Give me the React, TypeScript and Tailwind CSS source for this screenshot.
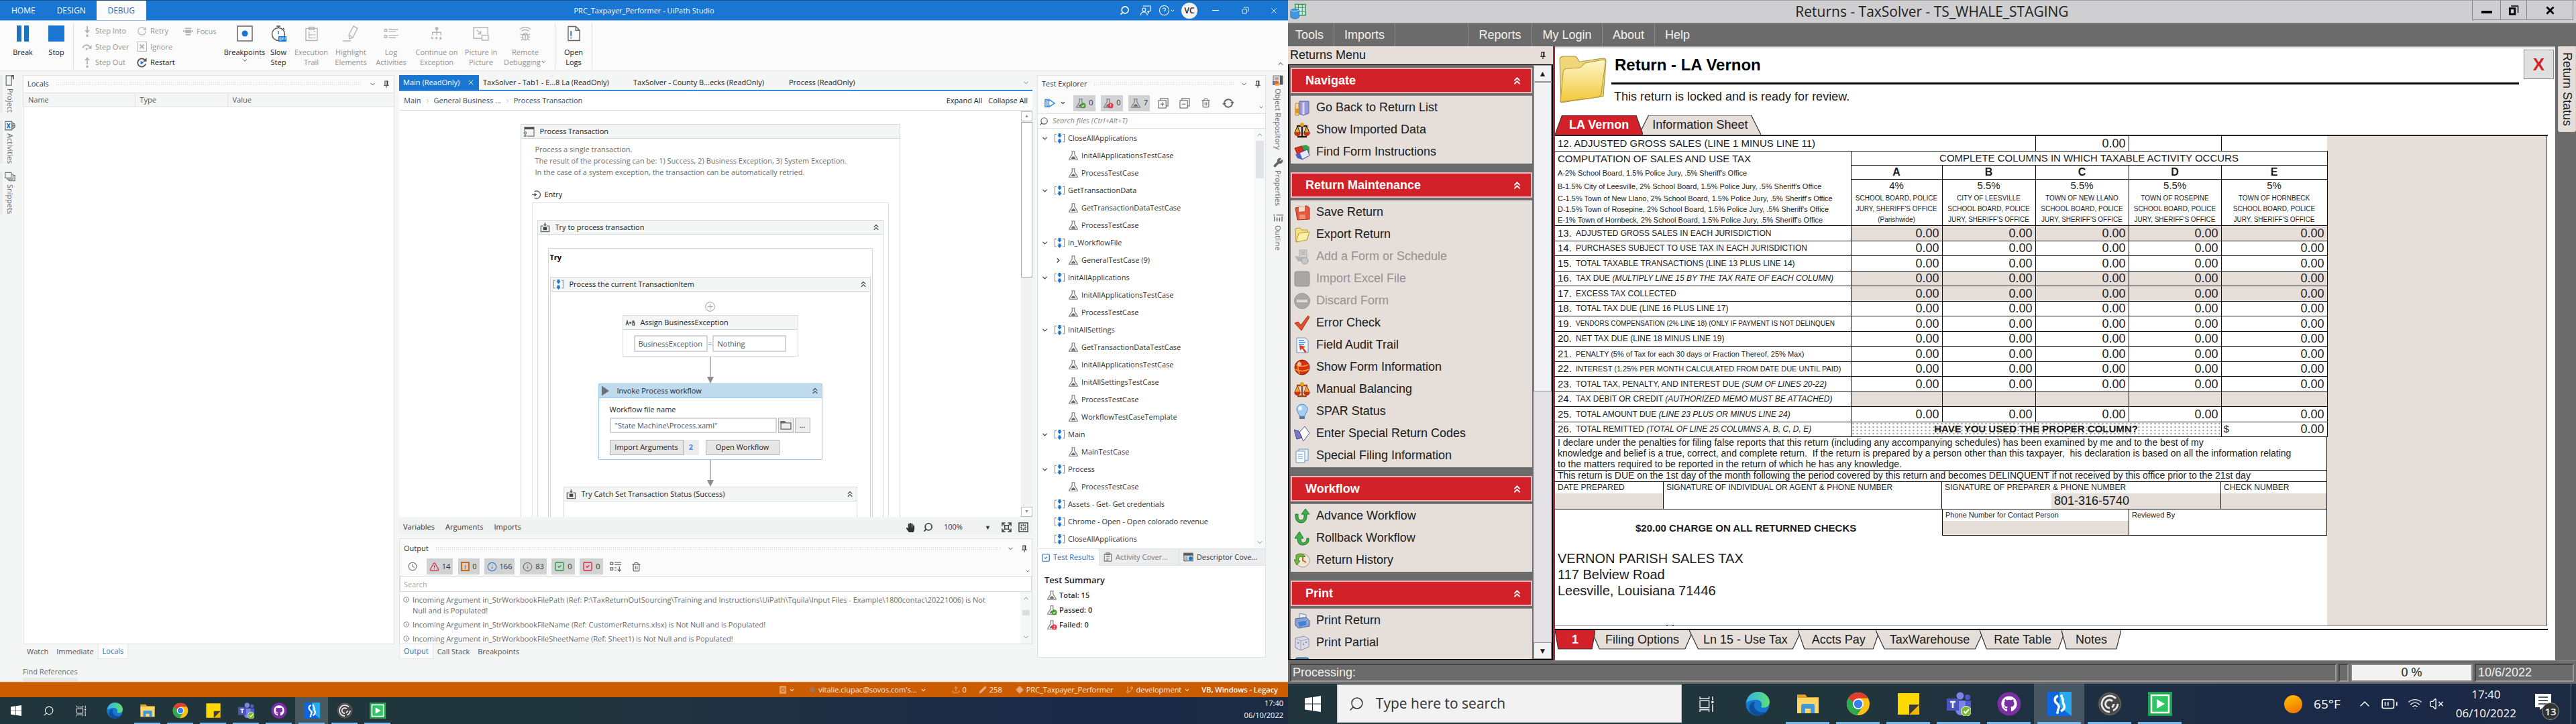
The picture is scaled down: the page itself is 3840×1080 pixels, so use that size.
import React from "react";
import {
  BatteryMedium,
  ChevronDown,
  ChevronRight,
  ChevronUp,
  ChevronsUp,
  CircleHelp,
  Clock,
  Copy,
  Diamond,
  GitBranch,
  Info,
  Pencil,
  RotateCw,
  Search,
  SquareCheck,
  Trash2,
  TriangleAlert,
  Upload,
  VolumeX,
  Wifi,
  Wrench,
  X,
} from "lucide-react";
import { FaGithub, FaHandPaper } from "react-icons/fa";

/* ---------- small icons of the studio window ---------- */

const Flask = ({ badge, className = "" }: { badge?: "ok" | "bad"; className?: string }) => (
  <svg viewBox="0 0 18 18" className={`h-[16px] w-[16px] shrink-0 ${className}`} fill="none" stroke="#7a7a7a" strokeWidth="1.3">
    <path d="M6 2h6M7 2v5L2 15v1h14v-1l-5-8V2" />
    <path d="M7 11.500L5 14.500h8L11 11.500l-2-1.500z" fill="#6b6b6b" stroke="none" />
    {badge === "ok" && (
      <>
        <circle cx="13" cy="13" r="4.500" fill="#4a9c2f" stroke="none" />
        <path d="M11 13l1.500 1.500L15 12" stroke="#fff" />
      </>
    )}
    {badge === "bad" && (
      <>
        <circle cx="13" cy="13" r="4.500" fill="#e5394b" stroke="none" />
        <path d="M13 10.500v3M13 14.500v1.200" stroke="#fff" strokeWidth="1.500" />
      </>
    )}
  </svg>
);

const Sequence = () => (
  <svg viewBox="0 0 18 18" className="h-[17px] w-[17px] shrink-0" fill="none">
    <path d="M4 2.500H1.500v12H4M14 2.500h2.500v12H14" stroke="#8a8a8a" strokeWidth="1.100" />
    <path d="M7 1h4v3h1.500L9 8 5.500 4H7zM7 10h4v3h1.500L9 17l-3.500-4H7z" fill="#1976d2" />
  </svg>
);

const TryIcon = () => (
  <svg viewBox="0 0 16 16" className="h-[15px] w-[15px] shrink-0" fill="none" stroke="#666" strokeWidth="1.500">
    <path d="M5 5.500H1.500v9h13v-9H11" />
    <path d="M5 7h6v5H5z" fill="#444" stroke="none" />
    <path d="M8 0v5M6 3l2 2 2-2" />
  </svg>
);

const PinIcon = ({ className = "" }: { className?: string }) => (
  <svg viewBox="0 0 12 14" className={`h-[12px] w-[10px] ${className}`} fill="none" stroke="currentColor" strokeWidth="1.200">
    <path d="M3 1h6M3.500 1v7M8 1v7M1.500 8.500h9M6 8.500V13" />
    <path d="M7.600 1v7" strokeWidth="2" />
  </svg>
);

const Grip = () => (
  <span className="h-[7px] min-w-0 flex-1 bg-[radial-gradient(#cfd1d1_1px,transparent_1px)] bg-[size:3px_3px]" />
);

const PanelHeader = ({ title }: { title: string }) => (
  <div className="flex h-[25px] items-center gap-[10px] pr-[6px] pl-[6px] text-[#333]">
    <h2>{title}</h2>
    <Grip />
    <button aria-label={`${title} options`}><ChevronDown size={11} /></button>
    <button aria-label={`Pin ${title}`}><PinIcon /></button>
  </div>
);

/* ---------- ribbon ---------- */

const grey = "#b4b6b6";

const RibbonBig = ({ w, icon, lines, on, caret }: { w: string; icon: React.ReactNode; lines: string[]; on?: boolean; caret?: boolean }) => (
  <button className={`flex flex-col items-center pt-[7px] ${w} ${on ? "text-[#222]" : "text-[#929494]"}`}>
    <span className="grid h-[24px] place-items-center">{icon}</span>
    <span className="mt-[8px] flex flex-col items-center leading-[15px] whitespace-nowrap">
      {lines.map((l, i) => (
        <span key={l} className="flex items-center">
          {l}
          {caret && i === 1 && <ChevronDown size={9} color="#333" />}
        </span>
      ))}
      {caret && lines.length === 1 && <ChevronDown size={10} />}
    </span>
  </button>
);

const RibbonSmall = ({ icon, label, on }: { icon: React.ReactNode; label: string; on?: boolean }) => (
  <button className={`flex h-[24px] items-center gap-[5px] ${on ? "text-[#222]" : "text-[#929494]"}`}>
    <span className="grid w-[15px] place-items-center">{icon}</span>
    {label}
  </button>
);

const Sep = () => <span className="mt-[3px] h-[69px] w-px bg-[#dcdede]" />;

const Ribbon = () => (
  <div className="flex h-[75px] shrink-0 border-b border-[#e2e4e4] bg-[#fbfbfb]">
    <RibbonBig w="ml-[9px] w-[50px]" on lines={["Break"]} icon={<svg viewBox="0 0 18 24" className="h-[24px] w-[18px]"><path d="M0 0h7v24H0zM11 0h7v24h-7z" fill="#1b74bd" /></svg>} />
    <RibbonBig w="w-[50px]" on lines={["Stop"]} icon={<span className="h-[24px] w-[24px] bg-[#1976d2]" />} />
    <Sep />
    <div className="flex w-[94px] flex-col pt-[4px] pl-[12px]">
      <RibbonSmall label="Step Into" icon={<svg viewBox="0 0 10 16" className="h-[16px] w-[10px]" fill={grey}><path d="M4 0h2v6h3L5 11 1 6h3zM3.500 12.500h3V16h-3z" /></svg>} />
      <RibbonSmall label="Step Over" icon={<svg viewBox="0 0 16 12" className="h-[12px] w-[15px]"><path d="M1.500 8a6 6 0 0 1 11-2" fill="none" stroke={grey} strokeWidth="2" /><path d="M15.500 3v6H9.500z" fill={grey} /><path d="M6 8h3v3H6z" fill={grey} /></svg>} />
      <RibbonSmall label="Step Out" icon={<svg viewBox="0 0 10 16" className="h-[16px] w-[10px]" fill={grey}><path d="M4 11h2V5h3L5 0 1 5h3zM3.500 12.500h3V16h-3z" /></svg>} />
    </div>
    <div className="flex w-[69px] flex-col pt-[4px]">
      <RibbonSmall label="Retry" icon={<RotateCw size={15} color={grey} />} />
      <RibbonSmall label="Ignore" icon={<svg viewBox="0 0 15 15" className="h-[15px] w-[15px]" fill="none" stroke={grey}><path d="M.5.5h14v14H.5z" /><path d="M4.500 4.500l6 6m0-6l-6 6" strokeWidth="2" /></svg>} />
      <RibbonSmall label="Restart" on icon={<svg viewBox="0 0 16 16" className="h-[15px] w-[15px]"><path d="M12.500 3.500A6.500 6.500 0 1 0 14 10" fill="none" stroke="#555" strokeWidth="2" /><path d="M15.500 0v6h-6z" fill="#555" /><path d="M6 5l5 3-5 3z" fill="#1976d2" /></svg>} />
    </div>
    <div className="flex w-[61px] flex-col pt-[4px]">
      <RibbonSmall label="Focus" icon={<svg viewBox="0 0 16 12" className="h-[12px] w-[15px]" fill={grey}><path d="M3 0h10v2H3zM0 4h2v3H0zM14 4h2v3h-2zM3 3.500h10v5H3zM4 10h8v2H4z" /></svg>} />
    </div>
    <RibbonBig w="w-[61px]" on caret lines={["Breakpoints"]} icon={<svg viewBox="0 0 24 24" className="h-[24px] w-[24px]"><path d="M1 1h22v22H1z" fill="none" stroke="#666" strokeWidth="1.500" /><circle cx="12" cy="12" r="4.500" fill="#1976d2" /></svg>} />
    <RibbonBig w="w-[40px]" on lines={["Slow", "Step"]} icon={<svg viewBox="0 0 24 24" className="h-[24px] w-[24px]" fill="none" stroke="#555" strokeWidth="1.500"><circle cx="12" cy="13" r="9.500" /><path d="M9 1h6M12 1v3M19 4l2 2" /><path d="M12 8v5" stroke="#1976d2" /><path d="M12 16h12v8H12z" fill="#1976d2" stroke="none" /><path d="M14 18h2v4h-2zM18 22v-4h2M18 20h2M22 22v-4h1.500" stroke="#fff" strokeWidth=".8" /></svg>} />
    <RibbonBig w="w-[58px]" lines={["Execution", "Trail"]} icon={<svg viewBox="0 0 20 24" className="h-[24px] w-[19px]" fill="none" stroke={grey} strokeWidth="1.500"><path d="M1 4h18v19H1zM6 2h8v4H6z" /><path d="M6 9v10h6M6 14h6M13 9h3M13 14h3M13 19h3" /></svg>} />
    <RibbonBig w="w-[60px]" lines={["Highlight", "Elements"]} icon={<svg viewBox="0 0 24 24" className="h-[24px] w-[24px]" fill="none" stroke={grey} strokeWidth="1.400"><path d="M16 1l6 3-7 14-5 2-1-6zM0 23h12M9 14l6 4" /></svg>} />
    <RibbonBig w="w-[60px]" lines={["Log", "Activities"]} icon={<svg viewBox="0 0 24 18" className="h-[16px] w-[24px]" fill="none" stroke={grey} strokeWidth="1.500"><path d="M1 2h4v4H1zM1 12h4v4H1zM8 2h16M8 6h12M8 12h16M8 16h12" /></svg>} />
    <RibbonBig w="w-[76px]" lines={["Continue on", "Exception"]} icon={<svg viewBox="0 0 20 22" className="h-[20px] w-[18px]" fill="none" stroke={grey} strokeWidth="1.500"><circle cx="10" cy="3" r="2" fill={grey} /><path d="M10 5v9M3 14V9h14v5M1 17l3 3m0-3l-3 3M8 17l3 3m0-3l-3 3" /><path d="M15 16l4 3-4 3z" fill={grey} stroke="none" /></svg>} />
    <RibbonBig w="w-[56px]" lines={["Picture in", "Picture"]} icon={<svg viewBox="0 0 26 22" className="h-[21px] w-[25px]" fill="none" stroke={grey} strokeWidth="1.500"><path d="M13 18H1V1h22v11M14 13h10v8H14zM6 5l6 6M12 6v5H7" /></svg>} />
    <RibbonBig w="w-[76px]" caret lines={["Remote", "Debugging"]} icon={<svg viewBox="0 0 20 24" className="h-[24px] w-[18px]" fill="none" stroke={grey} strokeWidth="1.600"><path d="M1 5q9-7 18 0M4 8q6-5 12 0" /><path d="M6 14h8v5a4 4 0 0 1-8 0zM7 14a3 3 0 0 1 6 0M2 13l4 2M18 13l-4 2M2 18h4M18 18h-4M3 23l3-2M17 23l-3-2M10 14v8" /></svg>} />
    <span className="w-[6px]" />
    <Sep />
    <RibbonBig w="w-[54px]" on lines={["Open", "Logs"]} icon={<svg viewBox="0 0 20 24" className="h-[24px] w-[19px]" fill="none" stroke="#666" strokeWidth="1.500"><path d="M1 1h12l6 6v16H1zM13 1v6h6" /><path d="M5.500 8v8M5.500 18v2" stroke="#1976d2" strokeWidth="2" /></svg>} />
    <Sep />
    <button aria-label="Collapse ribbon" className="mt-auto mr-[5px] mb-[4px] ml-auto"><ChevronUp size={12} color="#333" /></button>
  </div>
);

const TitleBar = () => (
  <header className="relative flex h-[31px] shrink-0 items-stretch border-t border-b border-t-[#1b4f87] border-b-[#9cc4ec] bg-[#1976d2] text-white">
    <nav className="flex items-stretch text-[12px]">
      <button className="pr-[16px] pl-[17px]">HOME</button>
      <button className="px-[16px]">DESIGN</button>
      <button className="w-[74px] bg-[#fbfbfb] text-[#2a68b4]">DEBUG</button>
    </nav>
    <h1 className="pointer-events-none absolute inset-x-0 text-center leading-[29px]">PRC_Taxpayer_Performer - UiPath Studio</h1>
    <div className="ml-auto flex items-center">
      <button aria-label="Search" className="w-[32px]"><Search size={15} className="mx-auto -scale-x-100" strokeWidth={2.500} /></button>
      <button aria-label="Feedback" className="w-[31px]"><svg viewBox="0 0 18 16" className="mx-auto h-[15px] w-[17px]" fill="none" stroke="#fff" strokeWidth="1.200"><path d="M5 1h12v8h-3v3l-2-3" /><circle cx="6.500" cy="7" r="2.700" /><path d="M1 16a5.500 5.500 0 0 1 11 0" /></svg></button>
      <button aria-label="Help" className="flex w-[32px] items-center justify-center"><CircleHelp size={17} strokeWidth={1.500} /><ChevronDown size={8} strokeWidth={3} /></button>
      <button className="ml-[6px] grid h-[24px] w-[24px] place-items-center rounded-full bg-[#f4f4f4] text-[12px] font-semibold text-[#222]">VC</button>
      <button aria-label="Minimize" className="ml-[5px] w-[44px]"><span className="mx-auto block h-px w-[10px] bg-white" /></button>
      <button aria-label="Restore" className="w-[44px]"><Copy size={11} className="mx-auto -scale-x-100" strokeWidth={2} /></button>
      <button aria-label="Close window" className="w-[42px]"><X size={14} className="mx-auto" strokeWidth={1.500} /></button>
    </div>
  </header>
);

/* ---------- studio body ---------- */

const SideTab = ({ icon, label, right }: { icon: React.ReactNode; label: string; right?: boolean }) => (
  <button className={`flex flex-col items-center gap-[4px] text-[#666] ${right ? "mr-[5px] border-r border-[#e6e8e8] pl-[3px]" : "border-l-4 border-[#eaecec]"}`}>
    {icon}
    <span className="text-[11px] leading-[18px] [writing-mode:vertical-rl]">{label}</span>
  </button>
);

const LocalsColumn = () => (
  <section className="flex min-w-0 flex-[554_1_0%] flex-col">
    <div className="flex min-h-0 flex-1 flex-col border border-[#dfe1e2] bg-white">
      <div className="bg-[#fbfbfb]"><PanelHeader title="Locals" /></div>
      <table className="w-full table-fixed border-y border-[#dfe1e2] bg-[#f4f6f6] text-left text-[#555]">
        <thead>
          <tr className="h-[21px]">
            <th className="w-[166px] border-r border-[#dfe1e2] pl-[7px] font-normal">Name</th>
            <th className="w-[138px] border-r border-[#dfe1e2] pl-[7px] font-normal">Type</th>
            <th className="pl-[7px] font-normal">Value</th>
          </tr>
        </thead>
      </table>
    </div>
    <div className="flex h-[22px] shrink-0 items-stretch text-[#555]">
      <button className="px-[6px]">Watch</button>
      <button className="px-[6px]">Immediate</button>
      <button className="border border-t-0 border-[#e4e6e6] bg-[#fbfbfb] px-[6px] text-[#2a68b4]">Locals</button>
    </div>
    <div className="mt-[9px] h-[25px] shrink-0">
      <button className="border-b-6 border-[#e7e9ea] leading-[19px] text-[#666]">Find References</button>
    </div>
  </section>
);

const Arrow = () => (
  <svg viewBox="0 0 10 40" className="mx-auto h-[40px] w-[10px]">
    <path d="M5 0v32" stroke="#8c8c8c" strokeWidth="1.200" />
    <path d="M0 30h10L5 40z" fill="#8c8c8c" />
  </svg>
);

const ActHead = ({ icon, title, blue, flat }: { icon: React.ReactNode; title: string; blue?: boolean; flat?: boolean }) => (
  <div className={`flex h-[21px] items-center gap-[8px] border-b px-[3px] ${blue ? "border-[#8fc6ea] bg-[#c1dbee]" : "border-[#d5d7d8] bg-[#f4f6f6]"}`}>
    {icon}
    <span className="flex-1 text-[#222]">{title}</span>
    {!flat && <button aria-label={`Collapse ${title}`}><ChevronsUp size={14} color="#3c4650" strokeWidth={2} /></button>}
  </div>
);

const Canvas = () => (
  <div className="flex min-h-0 flex-1 overflow-hidden bg-white">
    <div className="min-w-0 flex-1 overflow-hidden">
      <div className="mx-auto mt-[20px] h-[700px] w-[566px] border border-[#d5d7d8]">
        <ActHead flat title="Process Transaction" icon={<svg viewBox="0 0 18 16" className="h-[15px] w-[17px]" fill="none" stroke="#777" strokeWidth="1.300"><path d="M2 7V1h15v14H6" /><path d="M2 1h15v3H2z" fill="#444" stroke="none" /><circle cx="3" cy="10" r="1.800" /><path d="M3 12v4M1 14l2 2 2-2" /></svg>} />
        <p className="mt-[7px] pl-[21px] leading-[17px] text-[#6c6c6c]">
          Process a single transaction.<br />
          The result of the processing can be: 1) Success, 2) Business Exception, 3) System Exception.<br />
          In the case of a system exception, the transaction can be automatically retried.
        </p>
        <div className="mt-[17px] flex h-[16px] items-center gap-[6px] pl-[16px]">
          <svg viewBox="0 0 14 14" className="h-[13px] w-[13px]" fill="none" stroke="#555" strokeWidth="1.400"><path d="M4 2a6 6 0 1 1 0 10" /><path d="M0 7h6" /><path d="M4 4l4 3-4 3z" fill="#444" stroke="none" /></svg>
          Entry
        </div>
        <div className="mx-[16px] mt-[4px] h-[500px] border border-[#e0e2e2] px-[7px] pt-[25px]">
          <div className="h-[500px] border border-[#d5d7d8]">
            <ActHead title="Try to process transaction" icon={<TryIcon />} />
            <div className="mx-[15px] mt-[20px] h-[500px] border border-[#d5d7d8] px-[2px] pt-[5px]">
              <p className="h-[16px] font-bold text-black">Try</p>
              <div className="mt-[21px] h-[400px] border border-[#d5d7d8]">
                <ActHead title="Process the current TransactionItem" icon={<Sequence />} />
                <button aria-label="Add activity" className="mx-auto mt-[15px] block h-[15px] w-[15px]">
                  <svg viewBox="0 0 15 15" fill="none" stroke="#999"><circle cx="7.500" cy="7.500" r="6.800" /><path d="M3.500 7.500h8M7.500 3.500v8" /></svg>
                </button>
                <div className="mx-auto mt-[5px] h-[62px] w-[262px] border border-[#dcdede]">
                  <ActHead flat title="Assign BusinessException" icon={<svg viewBox="0 0 16 10" className="h-[9px] w-[15px]" fill="none" stroke="#555" strokeWidth="1.500"><path d="M1 9l2-7 2 7M2 6h2M6 5h4M8 3v4M12 2h2v3h-2zM12 5h3v4h-3z" /></svg>} />
                  <div className="flex items-center justify-between px-[16px] pt-[8px] text-[#44546a]">
                    <input aria-label="To" className="h-[25px] w-[110px] border-2 border-[#d4d6da] pl-[5px]" defaultValue="BusinessException" />
                    =
                    <input aria-label="Value" className="h-[25px] w-[110px] border-2 border-[#d4d6da] pl-[5px]" defaultValue="Nothing" />
                  </div>
                </div>
                <Arrow />
                <div className="mx-auto h-[114px] w-[334px] rounded-[1px] border border-[#9fcbe9]">
                  <ActHead blue title="Invoke Process workflow" icon={<svg viewBox="0 0 14 16" className="mr-[3px] h-[16px] w-[13px]"><path d="M1 0l12 8L1 16z" fill="#6d7278" /></svg>} />
                  <div className="px-[16px] pt-[8px]">
                    <label htmlFor="wf" className="block leading-[18px] text-[#222]">Workflow file name</label>
                    <div className="mt-[3px] flex gap-[2px]">
                      <input id="wf" className="h-[23px] w-[249px] border-2 border-[#d4d6da] pl-[6px] text-[#44546a]" defaultValue={'"State Machine\\Process.xaml"'} />
                      <button aria-label="Browse" className="grid h-[23px] w-[23px] place-items-center border border-[#b4b6b8] bg-[#eeeeee]"><svg viewBox="0 0 18 14" className="h-[13px] w-[17px]" fill="none" stroke="#666" strokeWidth="1.400"><path d="M1 1h6l2 2h8v10H1z" /><path d="M1 1h6v2H1z" fill="#666" /></svg></button>
                      <button className="h-[23px] w-[23px] border border-[#b4b6b8] bg-[#eeeeee]">...</button>
                    </div>
                    <div className="mt-[10px] flex">
                      <button className="h-[23px] w-[110px] border border-[#acaeb0] bg-[#e6e6e6] text-[#222]">Import Arguments</button>
                      <span className="grid h-[23px] w-[23px] place-items-center bg-[#ececec] font-bold text-[#3d8fe6]">2</span>
                      <button className="ml-[10px] h-[23px] w-[110px] border border-[#acaeb0] bg-[#e6e6e6] text-[#222]">Open Workflow</button>
                    </div>
                  </div>
                </div>
                <Arrow />
                <div className="mx-auto h-[100px] w-[438px] border border-[#d5d7d8]">
                  <ActHead title="Try Catch Set Transaction Status (Success)" icon={<TryIcon />} />
                </div>
              </div>
            </div>
          </div>
        </div>
      </div>
    </div>
    <div className="flex w-[17px] shrink-0 flex-col bg-[#f1f1f1]">
      <button aria-label="Scroll up" className="mt-px grid h-[15px] place-items-center border border-[#bcbcbc] bg-white text-[7px] text-[#888]">▲</button>
      <span className="mt-px h-[232px] border border-[#a9a9a9] bg-white" />
      <button aria-label="Scroll down" className="mt-auto grid h-[15px] place-items-center border border-[#bcbcbc] bg-white text-[7px] text-[#888]">▼</button>
    </div>
  </div>
);

const Counter = ({ w, icon, n }: { w: string; icon: React.ReactNode; n: string }) => (
  <button className={`flex h-[24px] items-center justify-center gap-[4px] bg-[#d0d2d4] text-[#333] ${w}`}>{icon}{n}</button>
);

const LogLine = ({ children }: { children: React.ReactNode }) => (
  <li className="flex gap-[5px] px-[5px] leading-[16px] text-[#6a6a6a]">
    <Info size={9} className="mt-[3px] shrink-0" />
    <span>{children}</span>
  </li>
);

const FitIcon = ({ out }: { out?: boolean }) => (
  <svg viewBox="0 0 16 16" className="h-[15px] w-[15px]" fill="none" stroke="#444" strokeWidth="1.600">
    {out ? (
      <path d="M1 1h14v14H1zM8 3v3M8 10v3M3 8h3M10 8h3M4 4l2 2M12 4l-2 2M4 12l2-2M12 12l-2-2" />
    ) : (
      <path d="M1 6V1h5M10 1h5v5M15 10v5h-5M6 15H1v-5M1 1l4 4M15 1l-4 4M15 15l-4-4M1 15l4-4M5 5h6v6H5z" />
    )}
  </svg>
);

const CenterColumn = () => (
  <section className="flex min-w-0 flex-[944_1_0%] flex-col">
    <div className="flex h-[24px] shrink-0 items-center border-b-2 border-[#3a88d8] text-[#222]">
      <button className="flex h-[22px] w-[119px] items-center justify-between bg-[#1976d2] pr-[6px] pl-[6px] text-white">Main (ReadOnly)<X size={12} /></button>
      <button className="w-[224px] pl-[6px] text-left">TaxSolver - Tab1 - E...8 La (ReadOnly)</button>
      <button className="w-[232px] pl-[6px] text-left">TaxSolver - County B...ecks (ReadOnly)</button>
      <button className="pl-[6px]">Process (ReadOnly)</button>
      <button aria-label="More tabs" className="mr-[4px] ml-auto"><ChevronDown size={11} color="#777" /></button>
    </div>
    <div className="flex h-[29px] shrink-0 items-center gap-[5px] border-b border-[#d5d7d8] bg-white px-[7px] text-[#3a475a]">
      <a href="#main">Main</a>
      <ChevronRight size={9} color="#aaa" />
      <a href="#gb">General Business ...</a>
      <ChevronRight size={9} color="#aaa" />
      <a href="#pt">Process Transaction</a>
      <button className="mr-[4px] ml-auto text-[#222]">Expand All</button>
      <button className="text-[#222]">Collapse All</button>
    </div>
    <Canvas />
    <div className="mt-[5px] flex h-[21px] shrink-0 items-center gap-[16px] bg-[#f0f1f1] px-[6px] text-[#333]">
      <button>Variables</button>
      <button>Arguments</button>
      <button>Imports</button>
      <button aria-label="Pan" className="ml-auto"><FaHandPaper size={14} color="#333" /></button>
      <button aria-label="Zoom" className="-ml-[4px]"><Search size={15} color="#444" strokeWidth={3} className="-scale-x-100" /></button>
      <button className="flex w-[70px] items-center justify-between">100%<span className="text-[9px]">▼</span></button>
      <button aria-label="Fit to screen"><FitIcon /></button>
      <button aria-label="Overview" className="-ml-[6px]"><FitIcon out /></button>
    </div>
    <div className="mt-[6px] shrink-0 border border-[#e0e2e2] bg-[#fbfbfb] pt-[2px]">
      <PanelHeader title="Output" />
      <div className="flex h-[28px] items-center pl-[12px]">
        <Clock size={14} color="#777" className="mr-[14px]" />
        <Counter w="w-[39px]" n="14" icon={<TriangleAlert size={15} color="#e5233d" />} />
        <span className="w-[8px]" />
        <Counter w="w-[32px]" n="0" icon={<span className="grid h-[14px] w-[13px] place-items-center border-2 border-[#c96b12] text-[9px] leading-none font-bold text-[#c96b12]">!</span>} />
        <span className="w-[7px]" />
        <Counter w="w-[45px]" n="166" icon={<Info size={15} color="#3178d6" />} />
        <span className="w-[8px]" />
        <Counter w="w-[40px]" n="83" icon={<Info size={15} color="#777" />} />
        <span className="w-[7px]" />
        <Counter w="w-[35px]" n="0" icon={<SquareCheck size={16} color="#249a3c" />} />
        <span className="w-[7px]" />
        <Counter w="w-[35px]" n="0" icon={<SquareCheck size={16} color="#e5233d" />} />
        <svg viewBox="0 0 20 18" className="ml-[10px] h-[16px] w-[18px]" fill="none" stroke="#666" strokeWidth="1.400"><path d="M1 2h4v4H1zM1 11h4v4H1zM8 2h11M8 6h11M8 11h3M8 15h3M16 9v8M13 14l3 3 3-3" /></svg>
        <Trash2 size={15} color="#666" className="ml-[14px]" />
        <ChevronDown size={8} className="mt-[14px] mr-[2px] ml-auto" />
      </div>
      <input aria-label="Search output" placeholder="Search" className="block h-[24px] w-full border border-[#d8dada] bg-white pl-[5px] placeholder:text-[#a4a6a8]" />
      <div className="flex h-[77px] bg-white">
        <ul className="flex flex-1 flex-col gap-[5px] overflow-hidden pt-[4px]">
          <LogLine>
            Incoming Argument in_StrWorkbookFilePath (Ref: P:\TaxReturnOutSourcing\Training and Instructions\UiPath\Tquila\Input Files - Example\1800contac\20221006) is Not<br />Null and is Populated!
          </LogLine>
          <LogLine>Incoming Argument in_StrWorkbookFileName (Ref: CustomerReturns.xlsx) is Not Null and is Populated!</LogLine>
          <LogLine>Incoming Argument in_StrWorkbookFileSheetName (Ref: Sheet1) is Not Null and is Populated!</LogLine>
        </ul>
        <div className="flex w-[17px] flex-col items-center bg-[#f6f7f7] py-[4px]">
          <ChevronUp size={11} color="#777" />
          <span className="mt-[12px] h-[8px] w-[11px] bg-[#dcdde0]" />
          <ChevronDown size={11} color="#777" className="mt-auto" />
        </div>
      </div>
    </div>
    <div className="mb-[34px] flex h-[22px] shrink-0 items-stretch text-[#555]">
      <button className="border border-t-0 border-[#e4e6e6] bg-[#fbfbfb] px-[6px] text-[#2a68b4]">Output</button>
      <button className="px-[6px]">Call Stack</button>
      <button className="px-[6px]">Breakpoints</button>
    </div>
  </section>
);

type Node = { t: string; k: "open" | "child" | "closed" | "leaf" };
const tree: Node[] = [
  { t: "CloseAllApplications", k: "open" },
  { t: "InitAllApplicationsTestCase", k: "child" },
  { t: "ProcessTestCase", k: "child" },
  { t: "GetTransactionData", k: "open" },
  { t: "GetTransactionDataTestCase", k: "child" },
  { t: "ProcessTestCase", k: "child" },
  { t: "in_WorkflowFile", k: "open" },
  { t: "GeneralTestCase (9)", k: "closed" },
  { t: "InitAllApplications", k: "open" },
  { t: "InitAllApplicationsTestCase", k: "child" },
  { t: "ProcessTestCase", k: "child" },
  { t: "InitAllSettings", k: "open" },
  { t: "GetTransactionDataTestCase", k: "child" },
  { t: "InitAllApplicationsTestCase", k: "child" },
  { t: "InitAllSettingsTestCase", k: "child" },
  { t: "ProcessTestCase", k: "child" },
  { t: "WorkflowTestCaseTemplate", k: "child" },
  { t: "Main", k: "open" },
  { t: "MainTestCase", k: "child" },
  { t: "Process", k: "open" },
  { t: "ProcessTestCase", k: "child" },
  { t: "Assets - Get- Get credentials", k: "leaf" },
  { t: "Chrome - Open - Open colorado revenue", k: "leaf" },
  { t: "CloseAllApplications", k: "leaf" },
];

const TreeRow = ({ t, k }: Node) => {
  const child = k === "child" || k === "closed";
  return (
    <li className={`flex h-[26px] items-center ${child ? "pl-[25px]" : "pl-[5px]"}`}>
      <span className="w-[19px] text-[#333]">
        {k === "open" && <ChevronDown size={11} strokeWidth={2.500} />}
        {k === "closed" && <ChevronRight size={11} strokeWidth={2.500} />}
      </span>
      {child ? <Flask className="ml-px" /> : <Sequence />}
      <span className="pl-[4px]">{t}</span>
    </li>
  );
};

const BoxStack = ({ plus }: { plus?: boolean }) => (
  <svg viewBox="0 0 17 17" className="h-[16px] w-[16px]" fill="none" stroke="#777" strokeWidth="1.300">
    <path d="M4 4V1h12v12h-3M1 4h12v12H1zM4 10h6" />
    {plus && <path d="M7 7v6" />}
  </svg>
);

const TestColumn = () => (
  <section className="flex min-w-0 flex-[341_1_0%] flex-col text-[#303030]">
    <div className="flex min-h-0 flex-1 flex-col border border-[#dfe1e2] bg-[#fbfbfb]">
      <PanelHeader title="Test Explorer" />
      <div className="flex h-[31px] items-center pl-[10px]">
        <button aria-label="Run tests" className="flex w-[43px] items-center gap-[7px]">
          <svg viewBox="0 0 17 14" className="h-[14px] w-[16px]" fill="none" stroke="#2f86de" strokeWidth="1.400"><path d="M1 1v12h3V1zM4 1l4 2.500M4 13l4-2.500M7 1v12l9-6z" /></svg>
          <ChevronDown size={9} strokeWidth={3} />
        </button>
        <Counter w="w-[33px]" n="0" icon={<Flask badge="ok" />} />
        <span className="w-[8px]" />
        <Counter w="w-[33px]" n="0" icon={<Flask badge="bad" />} />
        <span className="w-[8px]" />
        <Counter w="w-[32px]" n="7" icon={<Flask />} />
        <button aria-label="Expand all tests" className="ml-[12px]"><BoxStack plus /></button>
        <button aria-label="Collapse all tests" className="ml-[16px]"><BoxStack /></button>
        <button aria-label="Delete" className="ml-[16px]"><Trash2 size={15} color="#777" /></button>
        <button aria-label="Refresh" className="ml-[17px]"><svg viewBox="0 0 18 16" className="h-[16px] w-[18px]" fill="none" stroke="#666" strokeWidth="2"><path d="M3 8a6 6 0 0 1 11-3M15 8a6 6 0 0 1-11 3" /><path d="M0 8h6L3 11.500zM12 8h6l-3-3.500z" fill="#666" stroke="none" /></svg></button>
        <ChevronDown size={8} className="mt-[12px] mr-[2px] ml-auto" />
      </div>
      <label className="flex h-[23px] items-center gap-[6px] border-y border-[#dfe1e2] bg-white px-[2px]">
        <Search size={14} color="#555" className="-scale-x-100" />
        <input aria-label="Search files" placeholder="Search files (Ctrl+Alt+T)" className="flex-1 italic placeholder:text-[#888]" />
      </label>
      <div className="flex min-h-0 flex-1 bg-white">
        <ul className="min-w-0 flex-1 pt-px">{tree.map((n, i) => <TreeRow key={i} {...n} />)}</ul>
        <div className="flex w-[17px] flex-col items-center bg-[#f8f9f9] py-[3px]">
          <ChevronUp size={12} color="#888" />
          <span className="mt-[3px] h-[56px] w-[12px] bg-[#e2e3e6]" />
          <ChevronDown size={12} color="#888" className="mt-auto" />
        </div>
      </div>
    </div>
    <div className="mb-[36px] shrink-0">
      <div className="flex h-[25px] items-stretch text-[#777]">
        <button className="flex w-[93px] items-center gap-[4px] border-x border-[#dfe1e2] bg-white pl-[5px] text-[#2a68b4]"><SquareCheck size={14} />Test Results</button>
        <button className="flex flex-[117_1_0%] items-center gap-[5px] border-r border-b border-[#dfe1e2] bg-[#ebedef] pl-[6px]"><svg viewBox="0 0 14 16" className="h-[14px] w-[13px]" fill="none" stroke="#777" strokeWidth="1.300"><path d="M1 3h12v12H1zM4 1h6v3H4zM4 7h6M4 10h6M4 13h4" /></svg>Activity Cover...</button>
        <button className="flex flex-[128_1_0%] items-center gap-[5px] border-r border-b border-[#dfe1e2] bg-[#ebedef] pl-[6px] text-[#333]"><svg viewBox="0 0 16 14" className="h-[14px] w-[15px]" fill="none" stroke="#666" strokeWidth="1.300"><path d="M1 1h14v12H1z" /><path d="M1 1h14v3H1z" fill="#555" /><path d="M3 7h4M3 10h4" /><circle cx="11.500" cy="9" r="3" fill="#1976d2" stroke="none" /></svg>Descriptor Cove...</button>
      </div>
      <div className="h-[137px] border border-t-0 border-[#dfe1e2] bg-white pt-[12px] pl-[10px]">
        <h3 className="text-[13px] leading-[18px] font-semibold text-[#222]">Test Summary</h3>
        <ul className="mt-[3px] pl-[3px] font-semibold text-[#333]">
          <li className="flex h-[22px] items-center gap-[3px]"><Flask />Total: 15</li>
          <li className="flex h-[22px] items-center gap-[3px]"><Flask badge="ok" />Passed: 0</li>
          <li className="flex h-[22px] items-center gap-[3px]"><Flask badge="bad" />Failed: 0</li>
        </ul>
      </div>
    </div>
  </section>
);

const dim = "#eaa878";

const StudioStatus = () => (
  <footer className="flex h-[23px] shrink-0 items-center justify-end border-t border-[#dc8a45] bg-[#cc5c00] pr-[15px] text-[#fdeee0]">
    <button aria-label="Robot" className="flex items-center gap-[4px]"><svg viewBox="0 0 10 12" className="h-[12px] w-[10px]"><path d="M0 0h10v12H0z" fill="#e79a5e" /><circle cx="5" cy="6" r="2.500" fill="none" stroke="#cc5c00" /></svg><ChevronDown size={9} strokeWidth={3} /></button>
    <button className="ml-[22px] flex items-center gap-[5px]"><span className="h-[8px] w-[8px] rounded-full bg-[#a8734a]" />vitalie.ciupac@sovos.com's...<ChevronDown size={9} strokeWidth={3} /></button>
    <button className="ml-[38px] flex items-center gap-[4px]"><Upload size={12} color={dim} />0</button>
    <button className="ml-[18px] flex items-center gap-[4px]"><Pencil size={12} color={dim} fill={dim} />258</button>
    <button className="ml-[20px] flex items-center gap-[4px]"><Diamond size={12} color={dim} fill={dim} />PRC_Taxpayer_Performer</button>
    <button className="ml-[18px] flex items-center gap-[4px]"><GitBranch size={12} color={dim} />development<ChevronDown size={9} strokeWidth={3} /></button>
    <span className="ml-[17px] font-semibold text-white">VB, Windows - Legacy</span>
  </footer>
);

const StudioWindow = () => (
  <div className="flex min-h-0 flex-1 flex-col bg-[#f4f6f6] font-['Open_Sans','Noto_Sans',sans-serif] text-[11px] text-[#222]">
    <TitleBar />
    <Ribbon />
    <div className="flex min-h-0 flex-1 pt-[6px]">
      <aside className="flex w-[34px] flex-col items-start gap-[12px]">
        <SideTab label="Project" icon={<svg viewBox="0 0 14 18" className="mx-[4px] h-[16px] w-[13px]" fill="none" stroke="#777" strokeWidth="1.500"><path d="M1 1h9v16H1z" /><path d="M10 0h4v7h-2V3h-2z" fill="#555" stroke="none" /></svg>} />
        <SideTab label="Activities" icon={<svg viewBox="0 0 18 16" className="mx-[3px] h-[15px] w-[16px]" fill="none" stroke="#777" strokeWidth="1.500"><path d="M1 1h11v14H1zM12 3c7 1 7 9 0 10M12 8h5M14 4v8" /><path d="M4 4l5 8M9 4l-5 8" stroke="#1976d2" strokeWidth="2" /></svg>} />
        <SideTab label="Snippets" icon={<svg viewBox="0 0 18 16" className="mx-[3px] h-[15px] w-[16px]" fill="none" stroke="#777" strokeWidth="1.400"><path d="M1 1h10v9H1zM4 10v2h10V4h-3M7 12v3h10V6h-3" /></svg>} />
      </aside>
      <LocalsColumn />
      <div className="w-[7px] shrink-0" />
      <CenterColumn />
      <div className="w-[7px] shrink-0" />
      <TestColumn />
      <aside className="flex w-[33px] shrink-0 flex-col items-end gap-[12px]">
        <SideTab right label="Object Repository" icon={<svg viewBox="0 0 16 16" className="h-[16px] w-[16px]" fill="none"><path d="M1 1h14v13H1z" stroke="#777" fill="#ddd" /><path d="M11 1h4v13h-4z" fill="#555" /><path d="M3 4h6M3 6h6" stroke="#777" /><path d="M0 9h5v6H0z" fill="#2f86de" /><circle cx="6" cy="12" r="3.500" fill="#f0662b" /><path d="M4 13h5v3H4z" fill="#f6b52b" /></svg>} />
        <SideTab right label="Properties" icon={<Wrench size={15} fill="#666" color="#666" />} />
        <SideTab right label="Outline" icon={<svg viewBox="0 0 16 14" className="h-[13px] w-[15px]" fill="none" stroke="#666" strokeWidth="1.500"><path d="M0 2h3M5 2h11M2 4v8M6 6v6M10 6v6M14 4v8M5 9h2M9 9h2" /></svg>} />
      </aside>
    </div>
    <StudioStatus />
  </div>
);

/* ---------- tax window ---------- */

type Item = { t: string; off?: boolean; i: React.ReactNode };
const g = (children: React.ReactNode) => (
  <svg viewBox="0 0 24 24" className="h-[24px] w-[24px] shrink-0" fill="none">{children}</svg>
);
const scales = (c: string) => g(<><path d="M4 6h16M12 2v20M5 22h14" stroke={c} strokeWidth="2.500" /><circle cx="12" cy="4" r="3" fill="#e8a020" /><path d="M5 6L1 16h8zM19 6l-4 10h8z" stroke={c} fill="#f0a830" /><path d="M0 16h10q-1 5-5 5t-5-5zM14 16h10q-1 5-5 5t-5-5z" fill="#c83018" /></>);
const pages = (c: string) => g(<><path d="M7 2h14v17H7z" fill="#eaf3fb" stroke="#6a94c0" /><path d="M3 5h13v17H3z" fill={c} stroke="#6a94c0" /><path d="M6 10h7M6 13h7M6 16h7" stroke="#6a94c0" /></>);

const groups: { title: string; items: Item[] }[] = [
  {
    title: "Navigate",
    items: [
      { t: "Go Back to Return List", i: g(<><path d="M8 2h14v18l-8 3-6-2z" fill="#9a9ad8" stroke="#6060a0" /><path d="M14 4v18" stroke="#d8d8f4" strokeWidth="3" /><path d="M2 5h5v18H2z" fill="#f3d9a0" stroke="#c08030" /><path d="M2 13h5v7H2z" fill="#f09010" /></>) },
      { t: "Show Imported Data", i: scales("#2a1a10") },
      { t: "Find Form Instructions", i: g(<><path d="M9 3l9-2 5 3v9l-8 3z" fill="#38a048" /><path d="M1 6l10-3 4 9-9 6z" fill="#e03020" stroke="#902018" /><path d="M8 13l12-5 3 9-11 6z" fill="#e8e8fa" stroke="#4040a0" /><path d="M2 15l7-1 3 9-7-2z" fill="#5060c8" /></>) },
    ],
  },
  {
    title: "Return Maintenance",
    items: [
      { t: "Save Return", i: g(<><path d="M2 5l17-3 4 3v17l-18 1z" fill="#e4553c" stroke="#a83020" /><path d="M7 4l9-2v8l-9 1z" fill="#fbd8d0" /><path d="M8 15h9v7H8z" fill="#f0907c" /></>) },
      { t: "Export Return", i: g(<><path d="M2 3l7-1 2 3h9v14L3 23z" fill="#f6e07a" stroke="#b89830" /><path d="M3 23l4-13 16-2-4 12z" fill="#fbf0a8" stroke="#b89830" /></>) },
      { t: "Add a Form or Schedule", off: true, i: g(<><path d="M8 2h11v12H8z" fill="#d4d4d4" stroke="#a8a8a8" /><path d="M10 5h7M10 8h7" stroke="#999" /><path d="M1 11l5 8h16l-4-6z" fill="#b4b4b4" /><circle cx="16" cy="18" r="5" fill="#c8c8c8" stroke="#a0a0a0" /></>) },
      { t: "Import Excel File", off: true, i: g(<rect x="1" y="1" width="22" height="22" rx="3" fill="#aaa6a4" stroke="#979290" />) },
      { t: "Discard Form", off: true, i: g(<><circle cx="12" cy="12" r="11.500" fill="#aba8a6" stroke="#989492" /><path d="M4 10h16v4H4z" fill="#dedad8" /></>) },
      { t: "Error Check", i: g(<path d="M1 12l5-2 4 5L21 1l2 2-12 20z" fill="#e4502c" stroke="#a82c18" />) },
      { t: "Field Audit Trail", i: g(<><path d="M4 1h13l4 4v18H4z" fill="#f2f7fd" stroke="#6890c0" /><path d="M7 5h8M7 8h10M7 11h8" stroke="#3f86d8" strokeWidth="1.500" /><path d="M8 12l9 2-3 2 5 6-3 1-4-6-3 3z" fill="#e04020" /></>) },
      { t: "Show Form Information", i: g(<><circle cx="12" cy="12" r="11" fill="#d03018" stroke="#801808" /><path d="M3 8q8 5 18 0M2 15q10 5 20 0M8 2q-4 9 0 20" stroke="#f4a020" strokeWidth="1.500" /><circle cx="8" cy="7" r="3" fill="#fff" opacity=".6" /></>) },
      { t: "Manual Balancing", i: scales("#a04818") },
      { t: "SPAR Status", i: g(<><path d="M12 1a8 8 0 0 0-8 8c0 4 4 6 4 10h8c0-4 4-6 4-10a8 8 0 0 0-8-8z" fill="#a4cdf4" stroke="#5088c0" /><circle cx="9" cy="7" r="3" fill="#fff" opacity=".8" /><path d="M8 19h8v4H8z" fill="#5a7a9c" /></>) },
      { t: "Enter Special Return Codes", i: g(<><path d="M8 10l8-9 7 10-9 12z" fill="#fff" stroke="#5a5a90" /><path d="M0 6l7 2 5 10-8 2z" fill="#7878c0" stroke="#48488a" /></>) },
      { t: "Special Filing Information", i: pages("#f8fcff") },
    ],
  },
  {
    title: "Workflow",
    items: [
      { t: "Advance Workflow", i: g(<path d="M2 9q-1 13 9 13 9-1 8-13h4L17 1l-6 8h4q1 9-5 9-5 0-4-9z" fill="#3fae4c" stroke="#1e7a2a" />) },
      { t: "Rollback Workflow", i: g(<path d="M22 12q1 9-8 10Q5 23 5 12H1L8 2l6 10h-4q0 7 4 7 5-1 5-7z" fill="#3fae4c" stroke="#1e7a2a" />) },
      { t: "Return History", i: g(<><circle cx="13" cy="12" r="10" fill="#efe8da" stroke="#a89878" /><path d="M13 5v7l5 3" stroke="#d06020" strokeWidth="2" /><path d="M3 4q8-5 14 2l-4 1Q7 4 6 12l3 1-5 6-4-8h3z" fill="#74b83c" stroke="#3e8420" /></>) },
    ],
  },
  {
    title: "Print",
    items: [
      { t: "Print Return", i: g(<><path d="M8 1l10 2v9H8z" fill="#eaf2fc" stroke="#7080a8" /><path d="M2 9l16-2 5 5v8l-16 3-5-4z" fill="#8ca4d4" stroke="#4c5c90" /><path d="M6 14l12-2v6L8 21z" fill="#3f80d8" /></>) },
      { t: "Print Partial", i: g(<><path d="M2 5l13-3 7 4v12l-12 5-8-4z" fill="#dcdce8" stroke="#8c8ca8" /><path d="M2 5l8 4 12-3M10 9v14" stroke="#a0a0b8" /><circle cx="14" cy="14" r="1.300" fill="#8c8ca8" /><circle cx="18" cy="11" r="1.300" fill="#8c8ca8" /><circle cx="6" cy="12" r="1.300" fill="#8c8ca8" /></>) },
      { t: "", i: g(<><rect x="2" y="1" width="20" height="20" rx="3" fill="#3f88c0" stroke="#28608c" /><path d="M6 5h12v10H6z" fill="#d8ecf8" /></>) },
    ],
  },
];

const MenuGroup = ({ title, items }: { title: string; items: Item[] }) => (
  <section className="shrink-0">
    <h3 className="flex h-[38px] items-center border-2 border-[#f0b8ba] bg-[#d22128] pr-[12px] pl-[20px] font-bold text-white">
      {title}
      <button aria-label={`Collapse ${title}`} className="ml-auto"><ChevronsUp size={17} strokeWidth={2.500} /></button>
    </h3>
    <ul className="mt-[3px] border-t border-[#8a8684] bg-[#e5ded9] pt-px pb-px">
      {items.map((it) => (
        <li key={it.t}>
          <button aria-label={it.t || "Print options"} disabled={it.off} className={`flex h-[33px] w-full items-center gap-[9px] pl-[5px] ${it.off ? "text-[#96928e]" : ""}`}>{it.i}{it.t}</button>
        </li>
      ))}
    </ul>
  </section>
);

const Tab = ({ label, up, active, first }: { label: string; up?: boolean; active?: boolean; first?: boolean }) => (
  <button className={`relative flex h-[29px] items-center justify-center ${up ? (first ? "px-[21px]" : "px-[20px]") : first ? "px-[25px]" : "px-[21px]"} ${first ? "z-10" : "-ml-[6px]"} ${active ? "font-bold text-white" : ""}`}>
    <svg viewBox="0 0 100 29" preserveAspectRatio="none" className="absolute inset-0 h-full w-full" aria-hidden="true">
      <path d={up ? "M0 29L8 0H92L100 29" : "M0 0L8 28H92L100 0"} fill={active ? "#d22128" : "#e5ded9"} stroke="#333" strokeWidth="1.200" vectorEffect="non-scaling-stroke" />
    </svg>
    <span className="relative whitespace-nowrap">{label}</span>
  </button>
);

const z = "0.00";
type Line = { n: string; t: React.ReactNode; shade?: boolean; empty?: boolean };
const lines: Line[] = [
  { n: "13.", t: "ADJUSTED GROSS SALES IN EACH JURISDICTION", shade: true },
  { n: "14.", t: "PURCHASES SUBJECT TO USE TAX IN EACH JURISDICTION" },
  { n: "15.", t: "TOTAL TAXABLE TRANSACTIONS (LINE 13 PLUS LINE 14)" },
  { n: "16.", t: <>TAX DUE <i>(MULTIPLY LINE 15 BY THE TAX RATE OF EACH COLUMN)</i></>, shade: true },
  { n: "17.", t: "EXCESS TAX COLLECTED", shade: true },
  { n: "18.", t: "TOTAL TAX DUE (LINE 16 PLUS LINE 17)" },
  { n: "19.", t: "VENDORS COMPENSATION (2% LINE 18) (ONLY IF PAYMENT IS NOT DELINQUEN" },
  { n: "20.", t: "NET TAX DUE (LINE 18 MINUS LINE 19)" },
  { n: "21.", t: "PENALTY (5% of Tax for each 30 days or Fraction Thereof, 25% Max)" },
  { n: "22.", t: "INTEREST (1.25% PER MONTH CALCULATED FROM DATE DUE UNTIL PAID)" },
  { n: "23.", t: <>TOTAL TAX, PENALTY, AND INTEREST DUE <i>(SUM OF LINES 20-22)</i></> },
  { n: "24.", t: <>TAX DEBIT OR CREDIT <i>(AUTHORIZED MEMO MUST BE ATTACHED)</i></>, shade: true, empty: true },
  { n: "25.", t: <>TOTAL AMOUNT DUE <i>(LINE 23 PLUS OR MINUS LINE 24)</i></> },
];
const labelSize = (n: string) => (n === "19." ? "text-[10px]" : n === "22." || n === "21." ? "text-[11px]" : "text-[12px]");

const LineLabel = ({ n, t }: { n: string; t: React.ReactNode }) => (
  <div className="flex items-center pl-[4px] text-[15px] leading-[20px] whitespace-nowrap">
    <span className="w-[27px] shrink-0">{n}</span>
    <span className={labelSize(n)}>{t}</span>
  </div>
);

const cols = [
  { l: "A", r: "4%", d: ["SCHOOL BOARD, POLICE", "JURY, SHERIFF'S OFFICE", "(Parishwide)"] },
  { l: "B", r: "5.5%", d: ["CITY OF LEESVILLE", "SCHOOL BOARD, POLICE", "JURY, SHERIFF'S OFFICE"] },
  { l: "C", r: "5.5%", d: ["TOWN OF NEW LLANO", "SCHOOL BOARD, POLICE", "JURY, SHERIFF'S OFFICE"] },
  { l: "D", r: "5.5%", d: ["TOWN OF ROSEPINE", "SCHOOL BOARD, POLICE", "JURY, SHERIFF'S OFFICE"] },
  { l: "E", r: "5%", d: ["TOWN OF HORNBECK", "SCHOOL BOARD, POLICE", "JURY, SHERIFF'S OFFICE"] },
];
const cell = "border border-[#111] p-0";

const FormTable = () => (
  <table className="w-full table-fixed border-collapse">
    <colgroup>
      <col className="w-[441px]" />
      <col className="w-[136px]" />
      <col className="w-[139px]" />
      <col className="w-[139px]" />
      <col className="w-[138px]" />
      <col className="w-[158px]" />
    </colgroup>
    <tbody>
      <tr className="h-[22px]">
        <td colSpan={3} className="border-r border-b border-[#111] p-0 pl-[4px] text-[15px] leading-[20px]">12. ADJUSTED GROSS SALES (LINE 1 MINUS LINE 11)</td>
        <td className="border-r border-b border-[#111] p-0 pr-[4px] text-right leading-[20px]">{z}</td>
        <td className="border-r border-b border-[#111] p-0" />
        <td className="border-b border-[#111] p-0" />
      </tr>
      <tr className="h-[21px]">
        <td rowSpan={3} className="border-r border-b border-[#111] p-0 pl-[4px] align-top text-[11px] whitespace-nowrap">
          <div className="text-[15px] leading-[22px]">COMPUTATION OF SALES AND USE TAX</div>
          <div className="leading-[20px]">A-2% School Board, 1.5% Police Jury, .5% Sheriff's Office</div>
          <div className="leading-[20px]">B-1.5% City of Leesville, 2% School Board, 1.5% Police Jury, .5% Sheriff's Office</div>
          <div className="leading-[16px]">C-1.5% Town of New Llano, 2% School Board, 1.5% Police Jury, .5% Sheriff's Office</div>
          <div className="leading-[16px]">D-1.5% Town of Rosepine, 2% School Board, 1.5% Police Jury, .5% Sheriff's Office</div>
          <div className="leading-[16px]">E-1% Town of Hornbeck, 2% School Board, 1.5% Police Jury, .5% Sheriff's Office</div>
        </td>
        <td colSpan={5} className={`${cell} text-center text-[15px] leading-[20px]`}>COMPLETE COLUMNS IN WHICH TAXABLE ACTIVITY OCCURS</td>
      </tr>
      <tr className="h-[21px]">
        {cols.map((c) => <th key={c.l} className={`${cell} text-[16px] leading-[20px]`}>{c.l}</th>)}
      </tr>
      <tr className="h-[69px]">
        {cols.map((c) => (
          <td key={c.l} className={`${cell} text-center align-top text-[10px] leading-[16px] whitespace-nowrap`}>
            <div className="pb-[2px] text-[15px] leading-[18px]">{c.r}</div>
            {c.d.map((x) => <div key={x}>{x}</div>)}
          </td>
        ))}
      </tr>
      {lines.map((l, i) => (
        <tr key={l.n} className={i % 2 ? "h-[22px]" : "h-[23px]"}>
          <td className="border-r border-b border-[#111] p-0"><LineLabel n={l.n} t={l.t} /></td>
          {cols.map((c) => (
            <td key={c.l} className={`${cell} pr-[4px] text-right leading-[20px] ${l.shade ? "bg-[#e5ded9]" : ""}`}>{l.empty ? "" : z}</td>
          ))}
        </tr>
      ))}
      <tr className="h-[22px]">
        <td className="border-r border-b border-[#111] p-0"><LineLabel n="26." t={<>TOTAL REMITTED <i>(TOTAL OF LINE 25 COLUMNS A, B, C, D, E)</i></>} /></td>
        <td colSpan={4} className={`${cell} bg-[radial-gradient(#333_1px,transparent_1px)] bg-[size:6px_5px] text-center text-[15px] leading-[20px] font-bold`}>HAVE YOU USED THE PROPER COLUMN?</td>
        <td className={cell}>
          <div className="flex justify-between pr-[4px] pl-[3px] leading-[20px]"><span className="text-[15px]">$</span>{z}</div>
        </td>
      </tr>
    </tbody>
  </table>
);

const Signatures = () => (
  <div className="text-[12px]">
    <div className="h-[50px] border-r border-b border-[#111] pl-[4px] text-[14px] leading-[16px] whitespace-pre">
      <p>I declare under the penalties for filing false reports that this return (including any accompanying schedules) has been examined by me and to the best of my</p>
      <p>knowledge and belief is a true, correct, and complete return.  If the return is prepared by a person other than this taxpayer,  his declaration is based on all the information relating</p>
      <p>to the matters required to be reported in the return of which he has any knowledge.</p>
    </div>
    <p className="h-[17px] border-r border-b border-[#111] pl-[4px] text-[14px] leading-[15px]">This return is DUE on the 1st day of the month following the period covered by this return and becomes DELINQUENT if not received by this office prior to the 21st day</p>
    <div className="flex h-[41px] border-b border-[#111] leading-[17px]">
      <label className="flex w-[162px] flex-col border-r border-[#111]"><span className="pl-[4px]">DATE PREPARED</span><input className="min-h-0 w-full flex-1 bg-[#e5ded9]" /></label>
      <span className="w-[415px] border-r border-[#111] pl-[4px]">SIGNATURE OF INDIVIDUAL OR AGENT &amp; PHONE NUMBER</span>
      <label className="flex w-[416px] flex-col items-end border-r border-[#111]"><span className="w-full pl-[4px]">SIGNATURE OF PREPARER &amp; PHONE NUMBER</span><input className="min-h-0 w-[252px] flex-1 bg-[#e5ded9] pl-[4px] text-[18px]" defaultValue="801-316-5740" /></label>
      <label className="flex w-[158px] flex-col border-r border-[#111]"><span className="pl-[4px]">CHECK NUMBER</span><input className="min-h-0 w-full flex-1 bg-[#e5ded9]" /></label>
    </div>
    <div className="flex">
      <p className="w-[577px] shrink-0 pt-[17px] pl-[120px] text-[15px] leading-[22px] font-bold">$20.00 CHARGE ON ALL RETURNED CHECKS</p>
      <div className="flex h-[39px] flex-1 border-r border-b border-l border-[#111] text-[11px] leading-[17px]">
        <label className="flex w-[278px] flex-col border-r border-[#111]"><span className="pl-[4px] whitespace-nowrap">Phone Number for Contact Person</span><input className="min-h-0 w-full flex-1 bg-[#e5ded9]" /></label>
        <span className="pl-[4px]">Reviewed By</span>
      </div>
    </div>
    <address className="mt-[22px] pl-[4px] text-[20px] leading-[24px] not-italic">
      VERNON PARISH SALES TAX<br />117 Belview Road<br />Leesville, Louisiana 71446
    </address>
    <svg viewBox="0 0 40 3" className="mt-[39px] ml-[140px] h-[3px] w-[40px]" fill="#222" aria-hidden="true"><path d="M1 1h6v2H1zM11 1h7v2h-7zM26 0h2v3h-2zM35 0h2v3h-2z" /></svg>
  </div>
);

const TaxWindow = () => (
  <div className="flex min-h-0 flex-1 flex-col bg-[#6b6b6b] font-['Liberation_Sans',sans-serif] text-[18px] text-[#1a1a1a]">
    <header className="relative flex h-[34px] shrink-0 items-start border-t border-[#9c9c9c] bg-[#cfcfd1]">
      <svg viewBox="0 0 26 24" className="mt-[4px] ml-[3px] h-[24px] w-[25px]"><path d="M8 1h16v17H8z" fill="#c8f0dc" stroke="#389060" strokeWidth="1.500" /><path d="M8 6h16M8 12h16M13 1v17M19 1v17" stroke="#389060" /><path d="M1 10q7-4 13 0v11q-6 5-13 0z" fill="#3f98e0" stroke="#2468b0" /><path d="M1 10q6 4 13 0" fill="none" stroke="#bfe0fa" /></svg>
      <h1 className="pointer-events-none absolute inset-x-0 text-center font-['Open_Sans','Noto_Sans',sans-serif] text-[21px] leading-[32px] text-[#222]">Returns - TaxSolver - TS_WHALE_STAGING</h1>
      <div className="mr-[4px] ml-auto flex h-[29px] border border-t-0 border-[#888] text-black">
        <button aria-label="Minimize" className="w-[42px] border-r border-[#888]"><span className="mx-auto mt-[6px] block h-[4px] w-[16px] bg-black" /></button>
        <button aria-label="Restore" className="w-[39px] border-r border-[#888]"><svg viewBox="0 0 16 16" className="mx-auto h-[15px] w-[16px]" fill="none" stroke="#000" strokeWidth="3"><path d="M2 5h8v9H2z" /><path d="M4 1h11v11" strokeWidth="1.500" /></svg></button>
        <button aria-label="Close" className="w-[68px]"><X size={17} strokeWidth={4} className="mx-auto" /></button>
      </div>
    </header>
    <nav className="flex h-[35px] shrink-0 border-t border-[#858585] text-[#f2f2f2]">
      <button className="border-r border-[#8c8c8c] pr-[15px] pl-[11px]">Tools</button>
      <button className="w-[91px] border-r border-[#8c8c8c]">Imports</button>
      <span className="w-[109px] border-r border-[#8c8c8c]" />
      <button className="w-[95px] border-r border-[#8c8c8c]">Reports</button>
      <button className="w-[105px] border-r border-[#8c8c8c]">My Login</button>
      <button className="w-[78px] border-r border-[#8c8c8c]">About</button>
      <button className="px-[15px]">Help</button>
    </nav>
    <div className="flex min-h-0 flex-1">
      <aside className="flex w-[395px] shrink-0 flex-col">
        <div className="flex h-[27px] shrink-0 items-center justify-between bg-[#e5ded9] pr-[10px] pl-[3px]">
          <h2>Returns Menu</h2>
          <button aria-label="Pin menu"><PinIcon className="text-black" /></button>
        </div>
        <div className="flex min-h-0 flex-1 border-2 border-t border-black">
          <div className="flex min-w-0 flex-1 flex-col gap-[13px] overflow-hidden px-[2px] pt-[4px]">
            {groups.map((x) => <MenuGroup key={x.title} {...x} />)}
          </div>
          <div className="flex w-[27px] flex-col bg-[#e4e2e6]">
            <button aria-label="Scroll menu up" className="grid h-[25px] place-items-center border border-[#999] bg-[#f2f2f4] text-[12px]">▲</button>
            <span className="mt-px h-[461px] border border-[#999] bg-[#f2f2f4]" />
            <button aria-label="Scroll menu down" className="mt-auto grid h-[25px] place-items-center border border-[#999] bg-[#f2f2f4] text-[12px]">▼</button>
          </div>
        </div>
      </aside>
      <main className="flex min-w-0 flex-1 flex-col border-l-3 border-[#922c32] bg-white">
        <div className="h-[3px] shrink-0 border-y border-[#a8a8a8]" />
        <div className="flex shrink-0 items-start pr-[2px]">
          <svg viewBox="0 0 72 70" className="mt-[11px] ml-[4px] h-[71px] w-[73px]">
            <defs><linearGradient id="fold" x1="0" y1="0" x2="0" y2="1"><stop offset="0" stopColor="#fdf6c8" /><stop offset="1" stopColor="#f2c93a" /></linearGradient></defs>
            <path d="M3 5Q4 1 9 1h15q4 0 6 5l2 3 34-5q5-1 5 4l-4 52L5 69z" fill="#efd678" stroke="#a88c3c" />
            <path d="M4 68L8 24q1-5 6-5l16-1q4 0 7-4t8-4l22-4q4 0 3 5l-6 45q-1 4-5 5z" fill="url(#fold)" stroke="#b8983c" />
          </svg>
          <div className="ml-[7px] min-w-0 flex-1">
            <h2 className="pt-[9px] pl-[5px] text-[24px] leading-[32px] font-bold text-black">Return - LA Vernon</h2>
            <div className="mt-[10px] h-[3px] bg-black" />
            <p className="pt-[8px] pl-[4px] leading-[20px]">This return is locked and is ready for review.</p>
          </div>
          <button className="mt-[2px] ml-[7px] h-[44px] w-[45px] border border-[#888] bg-[#e0e0e0] text-[26px] font-bold text-[#d22128]">X</button>
        </div>
        <div className="mt-[18px] mr-[11px] flex shrink-0 border-b-2 border-[#222]">
          <Tab up first active label="LA Vernon" />
          <Tab up label="Information Sheet" />
        </div>
        <div className="mr-[12px] min-h-0 flex-1 overflow-hidden border-r-2 border-b border-[#8a8a8a] bg-[#e5ded9]">
          <div className="h-full w-[1151px] bg-white">
            <FormTable />
            <Signatures />
          </div>
        </div>
        <div className="mt-[4px] mr-[11px] h-[2px] shrink-0 bg-black" />
        <div className="mb-[16px] flex shrink-0">
          <Tab first active label="1" />
          {["Filing Options", "Ln 15 - Use Tax", "Accts Pay", "TaxWarehouse", "Rate Table", "Notes"].map((t) => <Tab key={t} label={t} />)}
        </div>
      </main>
      <aside className="flex w-[31px] shrink-0 justify-end">
        <button className="h-[128px] w-[27px] rounded-b-[3px] border border-[#d8d2ce] bg-[#e5ded9] text-[18px] leading-[25px] [writing-mode:vertical-rl]">Return Status</button>
      </aside>
    </div>
    <footer className="flex h-[35px] shrink-0 items-stretch gap-[3px] border-t border-[#858585] px-[3px] pt-[4px] pb-[3px] text-[#f0f0f0]">
      <span className="flex-1 border-2 border-t-[#444] border-r-[#999] border-b-[#999] border-l-[#444] pl-[2px] leading-[23px]">Processing:</span>
      <span className="w-[15px] border-2 border-t-[#444] border-r-[#999] border-b-[#999] border-l-[#444]" />
      <span className="w-[182px] border-2 border-[#8a8a8a] bg-[#f2f2f2] text-center leading-[23px] text-[#222]">0 %</span>
      <span className="w-[148px] border-2 border-t-[#444] border-r-[#999] border-b-[#999] border-l-[#444] pl-[3px] leading-[23px]">10/6/2022</span>
    </footer>
  </div>
);

/* ---------- taskbars ---------- */

const appIcons: { name: string; svg: React.ReactNode }[] = [
  { name: "Edge", svg: <><defs><linearGradient id="edgeTop" x1="0" y1="0" x2="1" y2="0"><stop offset="0" stopColor="#2fb1ef" /><stop offset="1" stopColor="#5fe070" /></linearGradient></defs><circle cx="18" cy="18" r="17.500" fill="#1577cf" /><path d="M1 17C2 7 9 0 19 0c10 0 17 8 17 15 0 7-6 10-13 8 3-5 0-11-6-11C9 12 3 14 1 17z" fill="url(#edgeTop)" /><path d="M14 15c-4 9 3 18 17 15-6 7-19 8-25-2-2-8 2-13 8-13z" fill="#0d4f9c" /></> },
  { name: "File Explorer", svg: <><path d="M2 4h12l3 4h17v6H2z" fill="#e2a022" /><path d="M2 9h32v23H2z" fill="#ffd667" /><path d="M8 32V21q0-3 3-3h14q3 0 3 3v11h-6v-7h-8v7z" fill="#3f97dc" /></> },
  { name: "Chrome", svg: <><circle cx="18" cy="18" r="17" fill="#fbc116" /><path d="M3.300 9.500A17 17 0 0 0 16 34.900L25 22 18 18z" fill="#2da94f" /><path d="M3.300 9.500A17 17 0 0 1 32.700 9.500H18L12 16z" fill="#e33b2e" /><circle cx="18" cy="18" r="8" fill="#fff" /><circle cx="18" cy="18" r="6.300" fill="#3b7ded" /></> },
  { name: "Sticky Notes", svg: <><path d="M2 2h32v17L19 34H2z" fill="#ffd800" /><path d="M19 34h15V19z" fill="#f0b800" /><path d="M19 34V19h15z" fill="#3c3a38" /></> },
  { name: "Teams", svg: <><circle cx="20" cy="6" r="5.500" fill="#7b83eb" /><circle cx="31" cy="8" r="4" fill="#5059c9" /><path d="M13 13h16v14a8 8 0 0 1-16 0z" fill="#7b83eb" /><path d="M28 13h8v11q-2 5-8 4z" fill="#5059c9" /><path d="M0 10h18v18H0z" fill="#4b53bc" /><path d="M5 15h8M9 15v9" stroke="#fff" strokeWidth="2.500" /><circle cx="29" cy="29" r="7.500" fill="#76b82a" stroke="#fff" /><path d="M25.500 29l2.500 3 5-6" fill="none" stroke="#fff" strokeWidth="2" /></> },
  { name: "GitHub", svg: <><circle cx="18" cy="18" r="17.500" fill="#7b2fa5" /><g transform="translate(6 6)"><FaGithub size={24} color="#fff" /></g></> },
  { name: "UiPath", svg: <><path d="M0 0h36v36H0z" fill="#0d66e0" /><path d="M18 0h18v36L18 22z" fill="#28a8ee" /><path d="M16 6c-6 2-6 8-2 11s4 7 1 12M21 8c4 3 1 7 3 10s3 7-4 11" fill="none" stroke="#fff" strokeWidth="3.500" /><circle cx="21" cy="6" r="2" fill="#fff" /><circle cx="15" cy="31" r="2" fill="#fff" /></> },
  { name: "Remote client", svg: <><circle cx="18" cy="18" r="17.500" fill="#464646" /><circle cx="18" cy="18" r="16" fill="none" stroke="#6c6c6c" /><path d="M18 30A12 12 0 1 1 27 10M18 24a6 6 0 1 1 4-10M30 18a12 12 0 0 1-7 10M24 18a6 6 0 0 1-3 5" fill="none" stroke="#e8e8e8" strokeWidth="2.800" /></> },
  { name: "Recorder", svg: <><path d="M0 0h36v36H0z" fill="#1fa350" /><path d="M5 5h26v26H5z" fill="#2fc764" stroke="#fff" strokeWidth="2.500" /><path d="M13 11l12 7-12 7z" fill="#fff" /></> },
];

const WinLogo = ({ className }: { className: string }) => (
  <svg viewBox="0 0 24 24" className={className} fill="#fff"><path d="M0 3.500L11 2v9.500H0zM12 1.900L24 0v11.500H12zM0 12.500h11V22L0 20.500zM12 12.500h12V24l-12-1.800z" /></svg>
);
const TaskView = ({ className }: { className: string }) => (
  <svg viewBox="0 0 24 24" className={className} fill="none" stroke="#e8e8e8" strokeWidth="1.400"><path d="M2 1v3h13V1M2 7h13v10H2zM2 23v-3h13v3M20 1v5M20 12v11" /><path d="M18.500 7.500h3v3h-3z" fill="#fff" stroke="none" /></svg>
);

const Taskbar = ({ big }: { big?: boolean }) => (
  <footer className={`flex shrink-0 items-stretch bg-[linear-gradient(90deg,#21353d_0%,#21353d_45%,#1a2848_85%,#1c2a42_100%)] font-['Open_Sans','Noto_Sans',sans-serif] text-white ${big ? "h-[60px]" : "h-[40px]"}`}>
    <button aria-label="Start" className={`grid place-items-center ${big ? "w-[73px]" : "w-[48px]"}`}><WinLogo className={big ? "h-[24px] w-[24px]" : "h-[16px] w-[16px]"} /></button>
    {big ? (
      <label className="mt-px mb-[2px] flex w-[514px] items-center gap-[17px] border border-[#c8c8c8] bg-[#f2f2f2] pl-[16px] text-[#333]">
        <Search size={26} strokeWidth={1.500} className="-scale-x-100" />
        <input aria-label="Search Windows" placeholder="Type here to search" className="w-full text-[21px] placeholder:text-[#333]" />
      </label>
    ) : (
      <button aria-label="Search Windows" className="grid w-[48px] place-items-center"><Search size={17} strokeWidth={1.500} className="-scale-x-100" /></button>
    )}
    <button aria-label="Task view" className={`grid place-items-center ${big ? "w-[75px]" : "w-[50px]"}`}><TaskView className={big ? "h-[25px] w-[25px]" : "h-[17px] w-[17px]"} /></button>
    {appIcons.map((a, i) => (
      <button key={a.name} aria-label={a.name} className={`relative grid place-items-center ${big ? "w-[75px]" : "w-[49px]"} ${i === 6 ? "bg-[#ffffff2e]" : ""}`}>
        <svg viewBox="0 0 36 36" className={big ? "h-[36px] w-[36px]" : "h-[24px] w-[24px]"}>{a.svg}</svg>
        {i > 0 && <span className={`absolute inset-x-[5px] bottom-0 bg-[#76b9ed] ${big ? "h-[3px]" : "h-[2px]"}`} />}
      </button>
    ))}
    {big ? (
      <div className="ml-auto flex items-center">
        <span className="h-[27px] w-[27px] rounded-full bg-[linear-gradient(160deg,#ffc400,#ef6c00)]" />
        <span className="ml-[17px] text-[19px]">65°F</span>
        <ChevronUp size={24} strokeWidth={1.500} className="ml-[24px]" />
        <BatteryMedium size={26} strokeWidth={1.500} className="ml-[12px]" />
        <Wifi size={22} strokeWidth={1.500} className="ml-[14px]" />
        <VolumeX size={22} strokeWidth={1.500} className="ml-[10px]" />
        <span className="ml-[18px] text-center text-[17px] leading-[28px]">17:40<br />06/10/2022</span>
        <span className="relative mr-[19px] ml-[28px] h-[60px] w-[34px]">
          <svg viewBox="0 0 24 24" className="absolute top-[15px] h-[24px] w-[24px]"><path d="M0 0h24v20H12l-5 4v-4H0z" fill="#fff" /><path d="M5 5h14M5 10h14M5 15h14" stroke="#1c2a44" strokeWidth="1.500" /></svg>
          <span className="absolute top-[28px] left-[10px] grid h-[26px] w-[26px] place-items-center rounded-full border border-[#999] bg-[#333] text-[15px] font-semibold">13</span>
        </span>
        <span className="mr-[7px] h-[60px] w-px bg-[#6c7688]" />
      </div>
    ) : (
      <div className="mr-[7px] ml-auto text-right text-[11px] leading-[18px]">17:40<br />06/10/2022</div>
    )}
  </footer>
);

export default function App() {
  return (
    <div className="flex h-screen w-full overflow-hidden">
      <div className="flex min-w-0 flex-1 flex-col">
        <StudioWindow />
        <Taskbar />
      </div>
      <div className="flex min-w-0 flex-1 flex-col">
        <TaxWindow />
        <Taskbar big />
      </div>
    </div>
  );
}
